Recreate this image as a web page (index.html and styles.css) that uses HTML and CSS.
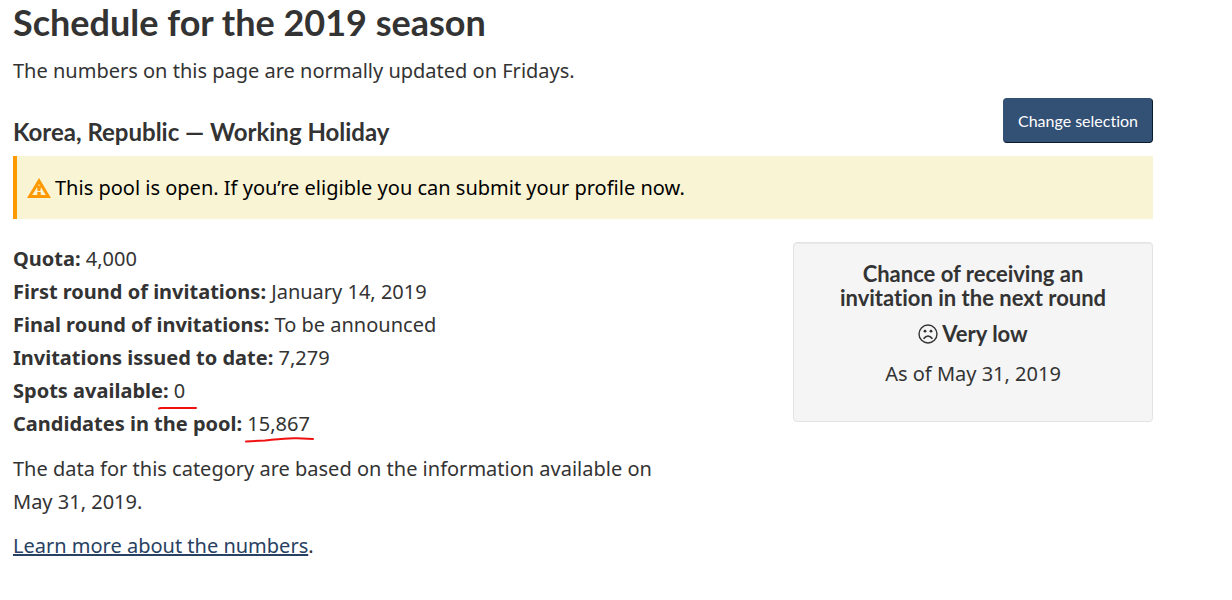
FILE: index.html
```html
<!DOCTYPE html>
<html lang="en">
<head>
    <meta charset="UTF-8">
    <meta name="viewport" content="width=device-width, initial-scale=1.0">
    <title>Schedule for the 2019 season</title>
    <link rel="stylesheet" href="styles.css">
</head>
<body>
    <main class="container">
        <h1 class="page-title">Schedule for the 2019 season</h1>
        <p class="intro">The numbers on this page are normally updated on Fridays.</p>

        <div class="category-header">
            <h2 class="category-title">Korea, Republic — Working Holiday</h2>
            <button type="button" class="change-button">Change selection</button>
        </div>

        <div class="alert">
            <svg class="alert-icon" viewBox="0 0 24 20" aria-hidden="true">
                <path fill="#ff9900" fill-rule="evenodd" d="M12 0 L24 20 H0 Z M12 6 L5.2 17 H18.8 Z"/>
                <path fill="#ff9900" d="M9.8 7.5 H14.2 L13.3 13 H10.7 Z M10.3 14 H13.7 V17 H10.3 Z"/>
            </svg>
            <p>This pool is open. If you’re eligible you can submit your profile now.</p>
        </div>

        <div class="details">
            <div class="details-main">
                <ul class="facts">
                    <li><strong>Quota:</strong> 4,000</li>
                    <li><strong>First round of invitations:</strong> January 14, 2019</li>
                    <li><strong>Final round of invitations:</strong> To be announced</li>
                    <li><strong>Invitations issued to date:</strong> 7,279</li>
                    <li><strong>Spots available:</strong> <span class="marked">0<svg class="mark mark-spots" viewBox="0 0 40 4" aria-hidden="true"><path d="M1 2.5 L3 2 H38"/></svg></span></li>
                    <li><strong>Candidates in the pool:</strong> <span class="marked">15,867<svg class="mark mark-candidates" viewBox="0 0 70 6" aria-hidden="true"><path d="M1 4.5 L20 3.5 C34 2 42 0.8 52 1.3 L68 2"/></svg></span></li>
                </ul>
                <p>The data for this category are based on the information available on May&nbsp;31,&nbsp;2019.</p>
                <p><a class="learn-link" href="#">Learn more about the numbers</a>.</p>
            </div>

            <aside class="chance-card">
                <h3 class="chance-title">Chance of receiving an invitation in the next round</h3>
                <p class="chance-level">
                    <svg class="chance-icon" viewBox="0 0 20 20" aria-hidden="true">
                        <circle cx="10" cy="10" r="9" fill="none" stroke="#333" stroke-width="1.4"/>
                        <circle cx="7" cy="7.2" r="1.4" fill="#333"/>
                        <circle cx="13" cy="7.2" r="1.4" fill="#333"/>
                        <path d="M5.5 14.8 Q10 9 14.5 14.8" fill="none" stroke="#333" stroke-width="1.5"/>
                    </svg>
                    Very low
                </p>
                <p class="chance-date">As of May 31, 2019</p>
            </aside>
        </div>
    </main>
</body>
</html>
```
FILE: styles.css
```css
* {
    margin: 0;
    padding: 0;
    box-sizing: border-box;
}

body {
    font-family: "Noto Sans", sans-serif;
    font-size: 20px;
    line-height: 33px;
    font-variant-ligatures: none;
    color: #333;
    background: #fff;
}

.container {
    max-width: 1166px;
    padding: 2px 13px 24px;
}

.page-title,
.category-title,
.chance-title,
.chance-level {
    font-family: Lato, sans-serif;
    font-weight: 700;
}

.page-title {
    font-size: 36px;
    line-height: 40px;
    margin-bottom: 12px;
}

.category-header {
    display: flex;
    justify-content: space-between;
    align-items: flex-end;
    margin: 11px 0 10px;
}

.category-title {
    font-size: 24px;
    line-height: 28px;
}

.change-button {
    padding: 10px 14px;
    margin-bottom: 3px;
    border: 1px solid #335075;
    border-right-color: #091c2d;
    border-bottom-color: #091c2d;
    border-radius: 4px;
    background: #335075;
    color: #fff;
    font-family: Lato, sans-serif;
    font-size: 16px;
    line-height: 23px;
    font-variant-ligatures: none;
    cursor: pointer;
}

.change-button:hover {
    background: #243850;
}

.alert {
    display: flex;
    align-items: center;
    gap: 4px;
    padding: 15px 10px;
    border-left: 4px solid #ff9900;
    background: #f9f4d4;
    color: #000;
}

.alert-icon {
    width: 24px;
    height: 20px;
    flex-shrink: 0;
}

.details {
    display: grid;
    grid-template-columns: 1fr 360px;
    gap: 30px;
    align-items: start;
    margin-top: 23px;
}

.facts {
    list-style: none;
    margin-bottom: 12px;
}

.details-main p {
    margin-bottom: 11px;
}

/* red pen strokes under the values */
.marked {
    position: relative;
}

.mark {
    position: absolute;
    fill: none;
    stroke: #f01010;
    stroke-width: 2;
    stroke-linecap: round;
}

.mark-spots {
    left: -16px;
    bottom: -6px;
    width: 40px;
    height: 4px;
}

.mark-candidates {
    left: -2px;
    bottom: -6px;
    width: 70px;
    height: 6px;
}

.learn-link {
    color: #284162;
}

.chance-card {
    padding: 19px;
    border: 1px solid #e3e3e3;
    border-radius: 4px;
    background: #f5f5f5;
    box-shadow: inset 0 1px 1px rgba(0, 0, 0, 0.05);
    text-align: center;
}

.chance-title {
    padding: 0 20px;
    font-size: 22px;
    line-height: 24px;
    margin-bottom: 12px;
}

.chance-level {
    display: flex;
    justify-content: center;
    align-items: center;
    gap: 4px;
    font-size: 22px;
    line-height: 24px;
    margin-bottom: 11px;
}

.chance-icon {
    width: 20px;
    height: 20px;
}

.chance-date {
    margin-bottom: 12px;
}

@media (max-width: 768px) {
    .details {
        grid-template-columns: 1fr;
    }

    .category-header {
        flex-wrap: wrap;
        gap: 10px;
    }
}
```
